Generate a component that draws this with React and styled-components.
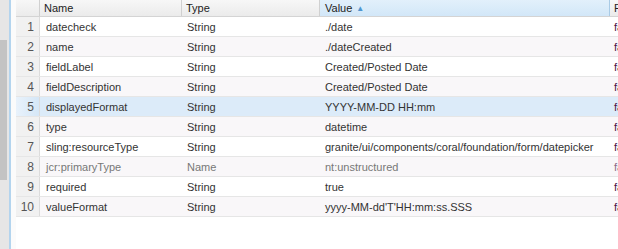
import React from "react";
import styled, { createGlobalStyle } from "styled-components";

const Global = createGlobalStyle`
  html, body { margin: 0; padding: 0; background: #fff; overflow: hidden; }
  body { font-family: "Liberation Sans", Arial, sans-serif; font-size: 11px; color: #333; }
`;

const Page = styled.div`
  display: flex;
  width: 618px;
  height: 249px;
  background: #fff;
  overflow: hidden;
`;

const SideRail = styled.div`
  width: 9px;
  flex: none;
  background: #e6e6e6;
  display: flex;
  flex-direction: column;
  padding-top: 40px;
  box-sizing: border-box;
`;

const RailThumb = styled.div`
  width: 7px;
  height: 140px;
  background: #c3c3c3;
`;

const Divider = styled.div`
  width: 2px;
  flex: none;
  background: #b3d4ee;
`;

const Spacer = styled.div`
  width: 5px;
  flex: none;
  background: #fbfbfb;
`;

const Table = styled.div`
  flex: 1;
  display: flex;
  flex-direction: column;
  min-width: 0;
`;

const cols = "24px 142px 138px 290px 40px";

const HeaderRow = styled.div`
  display: grid;
  grid-template-columns: ${cols};
  height: 16px;
  border-bottom: 1px solid #d4d4d4;
  background: linear-gradient(#f7f7f7, #ebebeb);
`;

const HeadCell = styled.div`
  display: flex;
  align-items: center;
  padding-left: ${(p) => (p.$sorted ? 5 : 4)}px;
  border-right: 1px solid ${(p) => (p.$sorted ? "#a9cbe6" : "#d0d0d0")};
  background: ${(p) => (p.$sorted ? "linear-gradient(#e2f0fb, #d2e7f8)" : "transparent")};
  color: #222;
  white-space: nowrap;
  overflow: hidden;
  line-height: 16px;
`;

const SortArrow = styled.span`
  color: #4f95cf;
  font-size: 8px;
  margin-left: 4px;
  margin-top: 1px;
`;

const Row = styled.div`
  display: grid;
  grid-template-columns: ${cols};
  height: 19px;
  border-bottom: 1px solid #e6e6e6;
  background: ${(p) => (p.$selected ? "#dcebf9" : p.$odd ? "#f9f7f9" : "#ffffff")};
  color: ${(p) => (p.$muted ? "#777" : "#333")};
`;

const NumCell = styled.div`
  display: flex;
  align-items: center;
  justify-content: flex-end;
  padding-right: 5px;
  font-size: 12px;
  background: ${(p) => (p.$selected ? "linear-gradient(90deg, #e9f2fb, #d5e7f7)" : "#f1f1f1")};
  border-right: 1px solid #dcdcdc;
  color: #555;
`;

const Cell = styled.div`
  display: flex;
  align-items: center;
  padding-left: ${(p) => (p.$pad ? p.$pad : 6)}px;
  white-space: nowrap;
  overflow: hidden;
`;

const FlagCell = styled(Cell)`
  padding-left: 4px;
  color: ${(p) => (p.$muted ? "#8a6a88" : "#4a1446")};
`;

const rows = [
  ["datecheck", "String", "./date"],
  ["name", "String", "./dateCreated"],
  ["fieldLabel", "String", "Created/Posted Date"],
  ["fieldDescription", "String", "Created/Posted Date"],
  ["displayedFormat", "String", "YYYY-MM-DD HH:mm"],
  ["type", "String", "datetime"],
  ["sling:resourceType", "String", "granite/ui/components/coral/foundation/form/datepicker"],
  ["jcr:primaryType", "Name", "nt:unstructured"],
  ["required", "String", "true"],
  ["valueFormat", "String", "yyyy-MM-dd'T'HH:mm:ss.SSS"],
];

export default function App() {
  return (
    <Page>
      <Global />
      <SideRail>
        <RailThumb />
      </SideRail>
      <Divider />
      <Spacer />
      <Table>
        <HeaderRow>
          <HeadCell />
          <HeadCell>Name</HeadCell>
          <HeadCell>Type</HeadCell>
          <HeadCell $sorted>
            Value<SortArrow>▲</SortArrow>
          </HeadCell>
          <HeadCell>Protected</HeadCell>
        </HeaderRow>
        {rows.map(([n, t, v], i) => {
          const selected = i === 4;
          const muted = i === 7;
          return (
            <Row key={n} $odd={i % 2 === 1} $selected={selected} $muted={muted}>
              <NumCell $selected={selected}>{i + 1}</NumCell>
              <Cell>{n}</Cell>
              <Cell $pad={5}>{t}</Cell>
              <Cell $pad={5}>{v}</Cell>
              <FlagCell $muted={muted}>false</FlagCell>
            </Row>
          );
        })}
      </Table>
    </Page>
  );
}
